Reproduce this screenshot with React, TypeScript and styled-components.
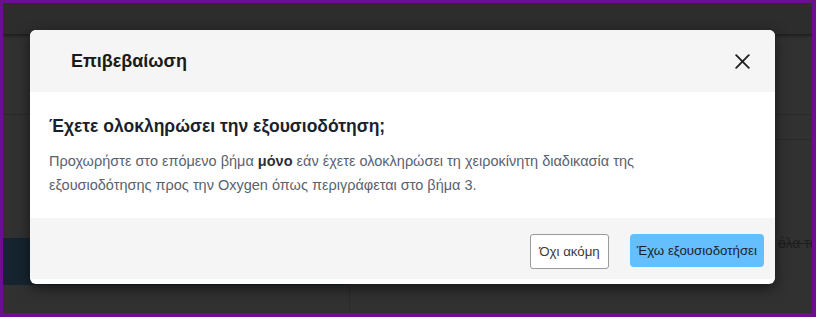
import React from 'react';
import styled, { createGlobalStyle } from 'styled-components';

const GlobalStyle = createGlobalStyle`
  html, body {
    margin: 0;
    padding: 0;
    background: #6a0f8e;
  }
  * {
    box-sizing: border-box;
  }
`;

const Frame = styled.div`
  position: relative;
  width: 816px;
  height: 317px;
  border-style: solid;
  border-color: #6a0f8e;
  border-width: 3px 4px 4px 3px;
  background: #313131;
  overflow: hidden;
  font-family: "Liberation Sans", Arial, sans-serif;
`;

const Topbar = styled.div`
  height: 32px;
  background: #2d2d2d;
  border-bottom: 1px solid #1f1f1f;
  box-shadow: 0 1px 3px rgba(0, 0, 0, 0.4);
`;

const Main = styled.div`
  display: grid;
  grid-template-columns: 346px 1fr;
  height: calc(100% - 32px);
`;

const Column = styled.div<{ $divider?: boolean }>`
  display: flex;
  flex-direction: column;
  border-left: ${(p) => (p.$divider ? '1px solid #2a2a2a' : 'none')};
`;

const Band = styled.div<{ $h: number; $line?: boolean; $bg?: string }>`
  height: ${(p) => p.$h}px;
  flex-shrink: 0;
  background: ${(p) => p.$bg || 'transparent'};
  border-bottom: ${(p) => (p.$line ? '1px solid #2a2a2a' : 'none')};
`;

const GhostRow = styled.div`
  height: 20px;
  padding-left: 428px;
  white-space: nowrap;
  font-size: 14px;
  line-height: 20px;
  color: #1e1e1e;
  text-decoration: line-through;
`;

const Overlay = styled.div`
  position: absolute;
  inset: 0;
  padding: 27px 0 0 27px;
`;

const Modal = styled.div`
  width: 745px;
  background: #ffffff;
  border-radius: 6px;
  padding-bottom: 5px;
  box-shadow: 0 4px 14px rgba(0, 0, 0, 0.55);
  overflow: hidden;
`;

const Header = styled.div`
  height: 62px;
  display: flex;
  align-items: center;
  justify-content: space-between;
  padding: 0 24px 0 41px;
  background: #f5f5f5;
`;

const Title = styled.h4`
  margin: 0;
  font-size: 18px;
  font-weight: 700;
  color: #1a1a1a;
`;

const CloseButton = styled.button`
  display: flex;
  align-items: center;
  justify-content: center;
  width: 18px;
  height: 18px;
  padding: 0;
  border: none;
  background: transparent;
  cursor: pointer;
`;

const Body = styled.div`
  padding: 22px 40px 21px 19px;
`;

const Question = styled.h3`
  margin: 0 0 10px;
  font-size: 17.5px;
  line-height: 25px;
  font-weight: 700;
  color: #1b1f2e;
`;

const Text = styled.p`
  margin: 0;
  font-size: 14.5px;
  line-height: 24px;
  color: #59626f;

  b {
    color: #2b2f3a;
  }
`;

const Footer = styled.div`
  height: 61px;
  display: flex;
  justify-content: flex-end;
  align-items: flex-start;
  gap: 21px;
  padding: 16px 11px 0 0;
  background: #f5f5f5;
`;

const Button = styled.button<{ $primary?: boolean }>`
  height: ${(p) => (p.$primary ? 33 : 35)}px;
  padding: 0 ${(p) => (p.$primary ? 7 : 8)}px;
  font-family: inherit;
  font-size: 13.3px;
  color: ${(p) => (p.$primary ? '#1b1f2a' : '#3a3a3a')};
  background: ${(p) => (p.$primary ? '#65befd' : '#ffffff')};
  border: ${(p) => (p.$primary ? 'none' : '1px solid #9a9a9a')};
  border-radius: ${(p) => (p.$primary ? 4 : 3)}px;
  cursor: pointer;
`;

const CloseIcon = () => (
  <svg width="15" height="15" viewBox="0 0 15 15" fill="none">
    <path d="M1.2 1.2 L13.8 13.8 M13.8 1.2 L1.2 13.8" stroke="#222" strokeWidth="1.9" strokeLinecap="round" />
  </svg>
);

export default function App() {
  return (
    <>
      <GlobalStyle />
      <Frame>
        <Topbar />
        <Main>
          <Column>
            <Band $h={80} $line />
            <Band $h={123} />
            <Band $h={47} $bg="#16242f" />
          </Column>
          <Column $divider>
            <Band $h={80} $line />
            <Band $h={25} $line />
            <Band $h={93} />
            <GhostRow>όλα τα</GhostRow>
          </Column>
        </Main>
        <Overlay>
          <Modal>
            <Header>
              <Title>Επιβεβαίωση</Title>
              <CloseButton aria-label="Κλείσιμο">
                <CloseIcon />
              </CloseButton>
            </Header>
            <Body>
              <Question>Έχετε ολοκληρώσει την εξουσιοδότηση;</Question>
              <Text>
                Προχωρήστε στο επόμενο βήμα <b>μόνο</b> εάν έχετε ολοκληρώσει τη χειροκίνητη διαδικασία της
                εξουσιοδότησης προς την Oxygen όπως περιγράφεται στο βήμα 3.
              </Text>
            </Body>
            <Footer>
              <Button>Όχι ακόμη</Button>
              <Button $primary>Έχω εξουσιοδοτήσει</Button>
            </Footer>
          </Modal>
        </Overlay>
      </Frame>
    </>
  );
}
